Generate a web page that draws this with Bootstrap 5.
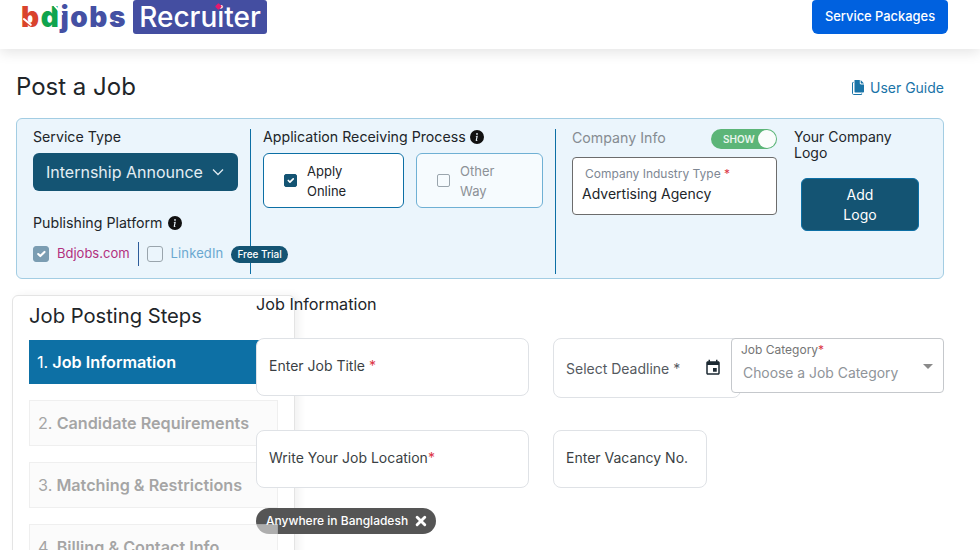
<!DOCTYPE html>
<html lang="en">
<head>
<meta charset="utf-8">
<title>Post a Job</title>
<link href="https://cdn.jsdelivr.net/npm/bootstrap@5.3.0/dist/css/bootstrap.min.css" rel="stylesheet">
<style>
html,body{height:550px;overflow:hidden}
body{font-family:Inter,"Liberation Sans",sans-serif;color:#212529;background:#fff;font-size:14px}
.topbar{height:49px;padding:0 32px 0 21px;box-shadow:0 4px 12px rgba(0,0,0,.1);align-items:flex-start;position:relative}
.brand-word{font-weight:900;font-size:28px;line-height:34px;letter-spacing:1.6px;position:relative;width:105px;white-space:nowrap}
.c-red{color:#d9432c}.c-green{color:#0fa44e}.c-blue{color:#4450a3}
.slash{position:absolute;height:1.5px;background:#fff;border-radius:1px}
.s1{left:1px;top:21px;width:11px;transform:rotate(40deg)}
.s2{left:31px;top:9px;width:13px;transform:rotate(48deg)}
.brand-tag{background:#444ea1;color:#fff;border-radius:3px;height:34px;width:134px;margin-left:7px;font-weight:500;font-size:28px;line-height:34px;text-align:center;position:relative}
.brand-dot{position:absolute;left:83px;top:4px;width:5px;height:5px;background:#e6186e;transform:rotate(45deg);border-radius:1px}
.pack-btn{background:#0061df;border:0;width:136px;height:34px;border-radius:4px 4px 6px 6px;font-size:12.9px;font-weight:500;padding:0;color:#fff}
.title-row{padding:7px 36px 0 16px;height:69px}
.page-title{font-size:24px;font-weight:400;margin:0;color:#212529}
.guide{color:#1a74a8;text-decoration:none;font-size:14px;display:flex;align-items:center;gap:6px}
.panel{margin:0 36px 0 16px;height:161px;background:#ebf5fc;border:1px solid #a3cde3;border-radius:6px;position:relative}
.p1{width:233px;padding:9px 0 0 16px;position:relative}
.p2{width:305px;padding-left:12px;border-left:1px solid #0c6fa5;margin:10px 0 4px}
.p3{width:222px;padding-left:16px;border-left:1px solid #0c6fa5;margin:10px 0 4px}
.p4{padding:0 0 0 17px;margin-top:10px;width:145px}
.plabel{font-size:14.2px;line-height:17px;color:#212529}
.lift{margin-top:-1px}
.svc{width:205px;height:38px;background:#145473;border-radius:6px;color:#e4eef4;font-size:16px;margin-top:8px;padding-left:13px;padding-right:14px;display:flex;align-items:center;justify-content:space-between;border:0}
.svc span{width:157px;overflow:hidden;white-space:nowrap;display:block}
.pub{margin-top:23px;display:flex;align-items:center;gap:5px}
.pub-row{margin-top:11px;display:flex;align-items:center;white-space:nowrap;font-size:13px;height:24px;position:relative;z-index:2}
.form-check-input.ck{margin:0;width:16px;height:16px;flex:none;border-radius:3px;border-color:#9aa5ad;background-color:transparent}
.form-check-input.ck:checked{background-color:#145473;border-color:#145473}
.ck.faded:checked{background-color:#7b9db2!important;border-color:#7b9db2!important}
.ck.sm{width:13px!important;height:13px!important;border-radius:2px!important}
.bd-link{color:#b2307e;margin-left:8px}
.li-link{color:#6aa8d0;margin-left:8px;letter-spacing:.01em}
.vbar{flex:none;display:block;width:1px;height:24px;background:#2d5c9a;margin:0 8px 0 8px}
.trial{background:#145473;color:#fff;font-size:10px;font-weight:500;border-radius:9px;height:17px;line-height:17px;padding:0 6px;margin-left:8px}
.ways{margin-top:8px;gap:12px;display:flex}
.way{height:55px;border-radius:6px;border:1px solid #0c6fa5;background:#fff;display:flex;align-items:center;font-size:13px;line-height:20px}
.way.on{width:141px;padding-left:20px;gap:10px}
.way.off{width:127px;padding-left:20px;gap:10px;background:#f6fbfe;border-color:#6fb0d4;color:#8c9197}
.info-head{display:flex;justify-content:space-between;align-items:flex-start;height:20px;width:205px;color:#868c92;font-size:14.2px;line-height:17px}
.tog{width:66px;height:20px;border-radius:10px;background:#5cb578;color:#e9f6ed;font-size:10px;font-weight:600;line-height:20px;display:flex;align-items:center;justify-content:space-between;padding:0 1px 0 12px}
.knob{width:18px;height:18px;background:#fbfdfc;border-radius:50%}
.industry{width:205px;height:58px;background:#fff;border:1px solid #6c6c6c;border-radius:4px;margin-top:8px;padding:8px 9px}
.ind-lab{font-size:12px;color:#7e8793;line-height:16px;padding-left:3px}
.ind-val{font-size:14px;line-height:20px;margin-top:2px}
.star{color:#dc3545}
.logo-lab{font-size:14px;line-height:16px;width:120px}
.add-logo{display:block;width:118px;height:53px;background:#145473;border:1px solid #0c6fa5;border-radius:6px;color:#fff;font-size:14px;line-height:20px;margin:17px 0 0 7px;padding:0 35px}
.work{padding-left:12px;margin-top:16px;display:flex;align-items:flex-start}
.steps{width:283px;flex:none;border:1px solid #e4e4e4;border-radius:6px 6px 0 0;padding:7px 16px;height:300px;box-shadow:4px 0 8px rgba(0,0,0,.06);margin-right:-39px;background:#fff}
.steps-title{font-size:20.2px;font-weight:400;line-height:26px;margin:0 0 11px}
.step{width:249px;border:1px solid #e2e2e2;font-size:16.2px;font-weight:600;height:46px;line-height:44px;padding-left:8px;margin-bottom:16px;background:#f8f8f8;opacity:.55;color:#5c5c5c;white-space:nowrap}
.step i{font-style:normal;font-weight:400}
.step.act{opacity:1;background:#0d70a5;border:0;color:#fff;height:44px;padding-left:8px;width:240px;margin-bottom:16px}
.main-area{flex:1;padding-right:36px;min-width:0}
.main-title{font-size:16.2px;font-weight:400;line-height:20px;margin:-1px 0 24px;color:#212529}
.fbox{position:relative;height:58px;background:#fff;border:1px solid #dfe2e6;border-radius:8px;padding:0 12px;display:flex;align-items:center;font-size:14px;color:#3a3f44}
.f-title{width:273px;padding-bottom:3px}
.f-date{width:188px;height:60px;margin-left:24px;justify-content:space-between;color:#555a5f;padding-right:18px}
.f-cat{width:213px;height:55px;margin-left:-10px;border:1px solid #c5c8cc;border-radius:4px;padding:3px 9px;display:block;z-index:1}
.cat-lab{font-size:12px;color:#757575;line-height:16px}
.cat-val{font-size:13.9px;color:#8f9499;line-height:20px;margin:5px 0 0 2px}
.caret-d{position:absolute;right:10px;top:25px;width:0;height:0;border-left:5px solid transparent;border-right:5px solid transparent;border-top:5px solid #8a8a8a}
.f-vac{width:154px;margin-left:24px;padding-bottom:3px}
.frow2{margin-top:32px}
.chip{display:inline-flex;align-items:center;gap:7px;height:26px;width:180px;border-radius:13px;background:#555;color:#fff;font-size:12px;font-weight:500;padding:0 9px 0 10px;margin-top:20px;white-space:nowrap}
</style>
</head>
<body>
<nav class="navbar topbar bg-white d-flex justify-content-between flex-nowrap">
  <div class="d-flex">
    <div class="brand-word"><span class="c-red">b</span><span class="c-green">d</span><span class="c-blue">jobs</span><span class="slash s1"></span><span class="slash s2"></span></div>
    <div class="brand-tag">Recruiter<span class="brand-dot"></span></div>
  </div>
  <button class="btn btn-primary pack-btn" type="button">Service Packages</button>
</nav>

<div class="title-row d-flex justify-content-between align-items-center">
  <h1 class="page-title">Post a Job</h1>
  <a class="guide" href="#">
    <svg width="12" height="15" viewBox="0 0 12 15"><path fill="#1a74a8" d="M2.5 0h5.3v3.2c0 .7.5 1.2 1.2 1.2H12V11.6c0 .6-.5 1-1 1H3.5c-.6 0-1-.4-1-1z"/><path fill="#1a74a8" d="M8.7 0 12 3.5H9.2c-.3 0-.5-.2-.5-.5z"/><path fill="none" stroke="#1a74a8" stroke-width="1" d="M1.6 2.4H.9C.7 2.4.5 2.6.5 2.9v10.5c0 .6.5 1.1 1.1 1.1h8v-1"/></svg>
    User Guide
  </a>
</div>

<section class="panel d-flex">
  <div class="p1">
    <div class="plabel">Service Type</div>
    <div class="svc"><span>Internship Announcement</span>
      <svg width="12" height="8" viewBox="0 0 12 8"><path d="M1 1.5 6 6.5 11 1.5" fill="none" stroke="#dfe9ef" stroke-width="1.3"/></svg>
    </div>
    <div class="pub plabel">Publishing Platform
      <svg width="14" height="14" viewBox="0 0 16 16"><path fill="#111" d="M8 16A8 8 0 1 0 8 0a8 8 0 0 0 0 16zm.93-9.41-1 4.7c-.07.34.03.53.3.53.2 0 .48-.07.68-.16l-.09.42c-.28.34-.9.58-1.44.58-.7 0-1-.42-.81-1.32l.74-3.47c.06-.3 0-.4-.3-.47l-.45-.08.08-.38zM8 5.5a1 1 0 1 1 0-2 1 1 0 0 1 0 2z"/></svg>
    </div>
    <div class="pub-row">
      <input class="form-check-input ck faded" type="checkbox" checked aria-label="Bdjobs.com">
      <span class="bd-link">Bdjobs.com</span>
      <span class="vbar"></span>
      <input class="form-check-input ck" type="checkbox" aria-label="LinkedIn">
      <span class="li-link">LinkedIn</span>
      <span class="trial">Free Trial</span>
    </div>
  </div>
  <div class="p2">
    <div class="plabel lift d-flex align-items-center gap-1">Application Receiving Process
      <svg width="14" height="14" viewBox="0 0 16 16"><path fill="#111" d="M8 16A8 8 0 1 0 8 0a8 8 0 0 0 0 16zm.93-9.41-1 4.7c-.07.34.03.53.3.53.2 0 .48-.07.68-.16l-.09.42c-.28.34-.9.58-1.44.58-.7 0-1-.42-.81-1.32l.74-3.47c.06-.3 0-.4-.3-.47l-.45-.08.08-.38zM8 5.5a1 1 0 1 1 0-2 1 1 0 0 1 0 2z"/></svg>
    </div>
    <div class="ways">
      <div class="way on"><input class="form-check-input ck sm" type="checkbox" checked aria-label="Apply Online"><span>Apply<br>Online</span></div>
      <div class="way off"><input class="form-check-input ck sm" type="checkbox" aria-label="Other Way"><span>Other<br>Way</span></div>
    </div>
  </div>
  <div class="p3">
    <div class="info-head"><span>Company Info</span><div class="tog"><span>SHOW</span><span class="knob"></span></div></div>
    <div class="industry">
      <div class="ind-lab">Company Industry Type <span class="star">*</span></div>
      <div class="ind-val">Advertising Agency</div>
    </div>
  </div>
  <div class="p4">
    <div class="logo-lab">Your Company Logo</div>
    <button class="add-logo" type="button">Add Logo</button>
  </div>
</section>

<div class="work">
  <aside class="steps">
    <h2 class="steps-title">Job Posting Steps</h2>
    <div class="step act"><i>1.</i> Job Information</div>
    <div class="step"><i>2.</i> Candidate Requirements</div>
    <div class="step"><i>3.</i> Matching &amp; Restrictions</div>
    <div class="step"><i>4.</i> Billing &amp; Contact Info</div>
  </aside>
  <main class="main-area">
    <h2 class="main-title">Job Information</h2>
    <div class="d-flex align-items-start">
      <div class="fbox f-title"><span>Enter Job Title <span class="star">*</span></span></div>
      <div class="fbox f-date"><span>Select Deadline *</span>
        <svg width="18" height="18" viewBox="0 0 24 24"><path fill="#1d2a33" d="M17 12h-5v5h5v-5zM16 1v2H8V1H6v2H5c-1.11 0-1.99.9-1.99 2L3 19c0 1.1.89 2 2 2h14c1.1 0 2-.9 2-2V5c0-1.1-.9-2-2-2h-1V1h-2zm3 18H5V8h14v11z"/></svg>
      </div>
      <div class="fbox f-cat">
        <div class="cat-lab">Job Category<span class="star">*</span></div>
        <div class="cat-val">Choose a Job Category</div>
        <span class="caret-d"></span>
      </div>
    </div>
    <div class="d-flex frow2">
      <div class="fbox f-title"><span>Write Your Job Location<span class="star">*</span></span></div>
      <div class="fbox f-vac"><span>Enter Vacancy No.</span></div>
    </div>
    <div class="chip">Anywhere in Bangladesh
      <svg width="14" height="14" viewBox="0 0 14 14"><path d="M2.5 2.5 11.500 11.500M11.500 2.500 2.500 11.500" stroke="#fff" stroke-width="3.400" stroke-linecap="round"/></svg>
    </div>
  </main>
</div>
<script src="https://cdn.jsdelivr.net/npm/bootstrap@5.3.0/dist/js/bootstrap.bundle.min.js"></script>
</body>
</html>
